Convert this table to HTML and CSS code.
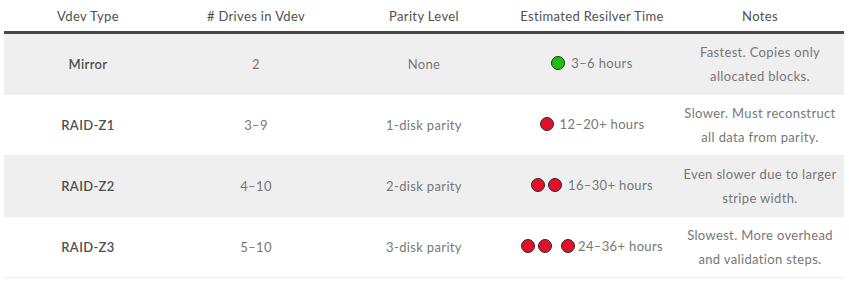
FILE: index.html
```html
<!DOCTYPE html>
<html>
<head>
<meta charset="utf-8">
<link rel="stylesheet" href="styles.css">
</head>
<body>
<table class="resilver">
  <thead>
    <tr>
      <th>Vdev Type</th>
      <th># Drives in Vdev</th>
      <th>Parity Level</th>
      <th>Estimated Resilver Time</th>
      <th>Notes</th>
    </tr>
  </thead>
  <tbody>
    <tr class="alt">
      <td class="type">Mirror</td>
      <td>2</td>
      <td>None</td>
      <td><span class="time"><span class="dot green"></span><span class="gap"></span>3–6 hours</span></td>
      <td>Fastest. Copies only<br>allocated blocks.</td>
    </tr>
    <tr>
      <td class="type">RAID-Z1</td>
      <td>3–9</td>
      <td>1-disk parity</td>
      <td><span class="time"><span class="dot red"></span><span class="gap"></span>12–20+ hours</span></td>
      <td>Slower. Must reconstruct<br>all data from parity.</td>
    </tr>
    <tr class="alt">
      <td class="type">RAID-Z2</td>
      <td>4–10</td>
      <td>2-disk parity</td>
      <td><span class="time"><span class="dot red"></span><span class="dot red"></span><span class="gap"></span>16–30+ hours</span></td>
      <td>Even slower due to larger<br>stripe width.</td>
    </tr>
    <tr>
      <td class="type">RAID-Z3</td>
      <td>5–10</td>
      <td>3-disk parity</td>
      <td><span class="time"><span class="dot red"></span><span class="dot red"></span><span class="wide"></span><span class="dot red"></span>24–36+ hours</span></td>
      <td>Slowest. More overhead<br>and validation steps.</td>
    </tr>
  </tbody>
</table>
</body>
</html>
```

FILE: styles.css
```css
html, body {
  margin: 0;
  padding: 0;
  background: #ffffff;
}
body {
  padding: 0 4px;
  font-family: Lato, "Open Sans", sans-serif;
  font-size: 13px;
  letter-spacing: 0.35px;
  color: #666666;
}
.resilver {
  width: 840px;
  border-collapse: collapse;
  table-layout: fixed;
}
.resilver th {
  height: 31px;
  padding: 0;
  font-weight: 400;
  color: #505050;
  text-align: center;
  vertical-align: middle;
  border-bottom: 3px solid #474747;
  line-height: 24px;
}
.resilver td {
  height: 60px;
  padding: 0 4px;
  text-align: center;
  vertical-align: middle;
  line-height: 24px;
  border-bottom: 1px solid #eeeeee;
  color: #777777;
}
.resilver tr.alt td {
  background: #efefef;
}
.resilver td.type {
  font-weight: 600;
  color: #505050;
}
.time {
  display: inline-flex;
  align-items: center;
}
.dot {
  width: 12px;
  height: 12px;
  border-radius: 50%;
  border: 1px solid #2a2a2a;
  margin-right: 3px;
}
.dot.green { background: #1fbf12; }
.dot.red { background: #e3102b; }
.gap { width: 3px; }
.wide { width: 6px; }
```
